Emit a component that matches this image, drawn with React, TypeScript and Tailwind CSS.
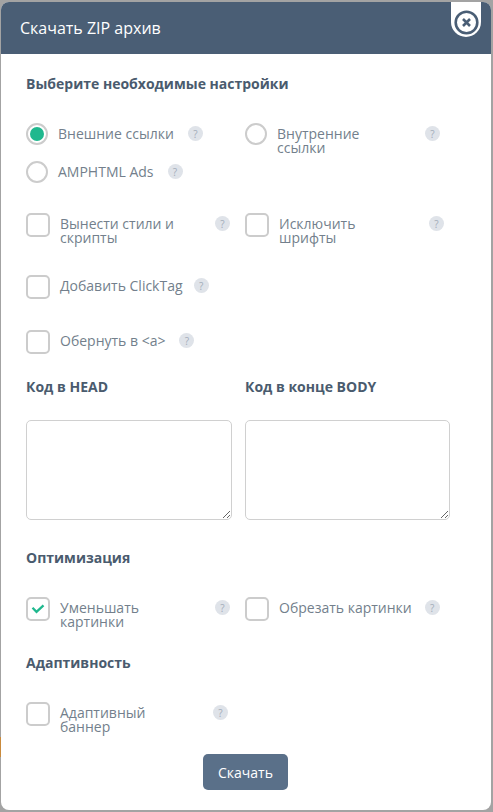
import type { ReactNode } from "react";

function Help({ className = "" }: { className?: string }) {
  return (
    <span className={`flex h-[15px] w-[15px] shrink-0 items-center justify-center rounded-full bg-[#dfe3e9] text-[10px] leading-none text-[#a3adb9] ${className}`}>
      ?
    </span>
  );
}

function Radio({ checked }: { checked?: boolean }) {
  return (
    <span className="flex h-[22px] w-[22px] shrink-0 items-center justify-center rounded-full border-2 border-[#cccccc] bg-white">
      {checked && <span className="h-[14px] w-[14px] rounded-full bg-[#1fb88e]" />}
    </span>
  );
}

function Check({ checked }: { checked?: boolean }) {
  return (
    <span className="flex h-[24px] w-[24px] shrink-0 items-center justify-center rounded-[5px] border-2 border-[#cccccc] bg-white">
      {checked && (
        <svg width="14" height="12" viewBox="0 0 14 12" fill="none">
          <path d="M1.5 4.8l4 4L12.5 2.4" stroke="#1fb88e" strokeWidth="2.3" />
        </svg>
      )}
    </span>
  );
}

function Option({
  control,
  labelWidth,
  helpGap = "ml-[13px]",
  children,
}: {
  control: ReactNode;
  labelWidth?: string;
  helpGap?: string;
  children: ReactNode;
}) {
  return (
    <div className="flex items-start">
      {control}
      <div className={`ml-[10px] pt-[4px] text-[14px] leading-[14px] text-[#737f8c] ${labelWidth ?? ""}`}>{children}</div>
      <Help className={labelWidth ? "mt-[3px]" : `mt-[3px] ${helpGap}`} />
    </div>
  );
}

function Heading({ children }: { children: ReactNode }) {
  return <h3 className="text-[14px] leading-[20px] font-bold text-[#4a5b6e]">{children}</h3>;
}

export default function App() {
  return (
    <div className="relative h-[812px] w-[493px] overflow-hidden bg-[#a3a3a3] pt-[2px] pl-[1px] font-['Open_Sans',sans-serif]">
      <span className="absolute top-[737px] left-0 h-[20px] w-[1px] bg-[#c98a3c]" />
      <div className="relative h-[808px] w-[490px] overflow-hidden rounded-[8px] bg-white">
        <header className="flex h-[52px] items-center bg-[#4a5e75] pb-[1px] pl-[19px] text-[16px] text-white">
          Скачать ZIP архив
        </header>
        <button className="absolute top-0 right-[10px] flex h-[35px] w-[30px] items-center justify-center rounded-b-[15px] bg-white pt-[6px]">
          <svg width="25" height="25" viewBox="0 0 25 25" fill="none" stroke="#4a5e75">
            <circle cx="12.5" cy="12.5" r="10.8" strokeWidth="2.6" />
            <path d="M9 9l7 7M16 9l-7 7" strokeWidth="2.6" />
          </svg>
        </button>

        <div className="pl-[25px]">
          <div className="pt-[20px]">
            <Heading>Выберите необходимые настройки</Heading>
          </div>

          <div className="mt-[29px] grid grid-cols-[219px_1fr]">
            <div className="flex flex-col gap-[16px]">
              <Option control={<Radio checked />} helpGap="ml-[14px]">
                Внешние ссылки
              </Option>
              <Option control={<Radio />} helpGap="ml-[14px]">
                AMPHTML Ads
              </Option>
            </div>
            <Option control={<Radio />} labelWidth="w-[148px]">
              Внутренние
              <br />
              ссылки
            </Option>
          </div>

          <div className="mt-[30px] grid grid-cols-[219px_1fr]">
            <Option control={<Check />} labelWidth="w-[155px]">
              Вынести стили и
              <br />
              скрипты
            </Option>
            <Option control={<Check />} labelWidth="w-[150px]">
              Исключить
              <br />
              шрифты
            </Option>
          </div>

          <div className="mt-[30px]">
            <Option control={<Check />} helpGap="ml-[11px]">
              Добавить ClickTag
            </Option>
          </div>
          <div className="mt-[31px]">
            <Option control={<Check />} helpGap="ml-[14px]">
              Обернуть в &lt;a&gt;
            </Option>
          </div>

          <div className="mt-[23px] grid grid-cols-[219px_1fr]">
            <Heading>Код в HEAD</Heading>
            <Heading>Код в конце BODY</Heading>
          </div>

          <div className="mt-[23px] grid grid-cols-[219px_1fr]">
            <textarea className="block h-[100px] w-[206px] rounded-[5px] border border-[#d0d0d0] bg-white" />
            <textarea className="block h-[100px] w-[205px] rounded-[5px] border border-[#d0d0d0] bg-white" />
          </div>

          <div className="mt-[28px]">
            <Heading>Оптимизация</Heading>
          </div>

          <div className="mt-[29px] grid grid-cols-[219px_1fr]">
            <Option control={<Check checked />} labelWidth="w-[155px]">
              Уменьшать
              <br />
              картинки
            </Option>
            <Option control={<Check />}>Обрезать картинки</Option>
          </div>

          <div className="mt-[24px]">
            <Heading>Адаптивность</Heading>
          </div>

          <div className="mt-[29px]">
            <Option control={<Check />} labelWidth="w-[153px]">
              Адаптивный
              <br />
              баннер
            </Option>
          </div>

          <div className="mt-[20px] flex w-[439px] justify-center">
            <button className="h-[36px] w-[85px] rounded-[5px] bg-[#5a7089] text-[14px] text-white">Скачать</button>
          </div>
        </div>
      </div>
    </div>
  );
}
